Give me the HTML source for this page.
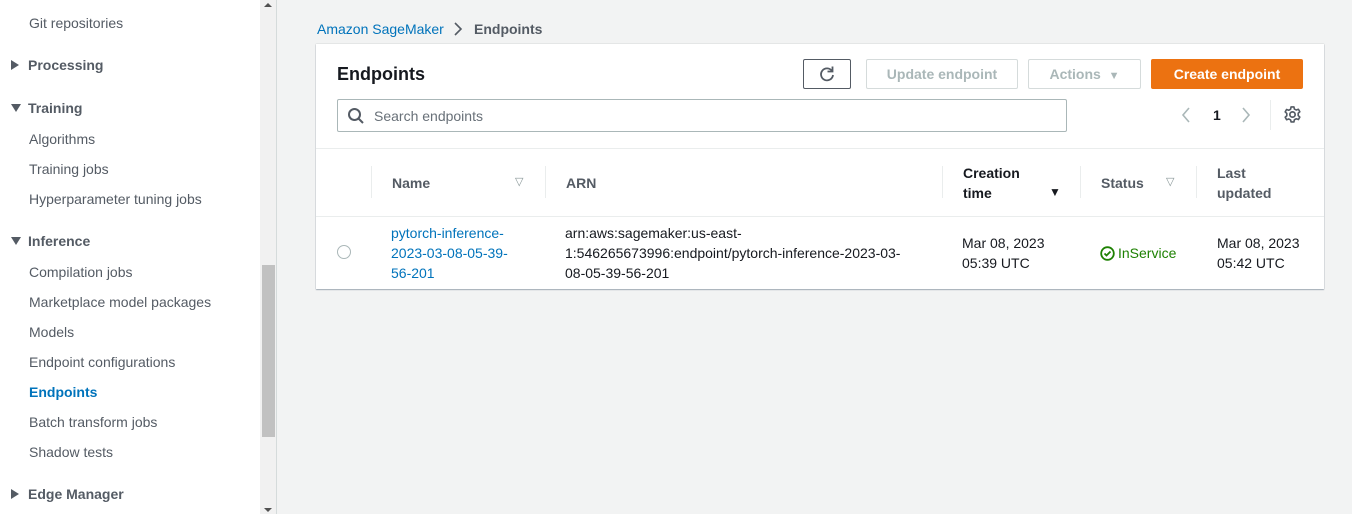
<!DOCTYPE html>
<html><head><style>
*{margin:0;padding:0;box-sizing:border-box}
body{width:1352px;height:514px;overflow:hidden;background:#f2f3f3;font-family:"Liberation Sans",Arial,sans-serif;font-size:14px;color:#16191f;position:relative}
.a{position:absolute;white-space:nowrap}
.sb{position:absolute;left:0;top:0;width:260px;height:514px;background:#fff}
.trk{position:absolute;left:260px;top:0;width:17px;height:514px;background:#f1f1f1;border-right:1px solid #d5dbdb}
.th{position:absolute;left:262px;top:265px;width:13px;height:172px;background:#c1c1c1}
.it{color:#545b64;left:29px}
.hd{font-weight:bold;color:#545b64;left:28px}
.tri{position:absolute;left:11px;width:0;height:0}
.r{border-top:5px solid transparent;border-bottom:5px solid transparent;border-left:8px solid #545b64}
.d{border-left:5px solid transparent;border-right:5px solid transparent;border-top:8px solid #545b64}
.card{position:absolute;left:316px;top:44px;width:1008px;height:245px;background:#fff;box-shadow:0 1px 1px rgba(0,31,63,.3),0 0 1px rgba(0,28,36,.3)}
.btn{position:absolute;height:30px;border:1px solid #d5dbdb;background:#fff;color:#aab7b8;font-weight:bold;text-align:center;line-height:28px;border-radius:2px}
.sep{position:absolute;width:1px;background:#eaeded}
.col{font-weight:bold;color:#545b64}
</style></head><body>
<div class="sb"></div>
<div class="trk"></div><div class="th"></div>
<div class="a" style="left:264px;top:3px;border-left:4px solid transparent;border-right:4px solid transparent;border-bottom:4px solid #505050;width:0"></div>
<div class="a" style="left:264px;top:508px;border-left:4px solid transparent;border-right:4px solid transparent;border-top:4px solid #505050;width:0"></div>

<div class="a it" style="top:15px">Git repositories</div>
<div class="tri r" style="top:60px"></div><div class="a hd" style="top:57px">Processing</div>
<div class="tri d" style="top:104px"></div><div class="a hd" style="top:100px">Training</div>
<div class="a it" style="top:131px">Algorithms</div>
<div class="a it" style="top:161px">Training jobs</div>
<div class="a it" style="top:191px">Hyperparameter tuning jobs</div>
<div class="tri d" style="top:237px"></div><div class="a hd" style="top:233px">Inference</div>
<div class="a it" style="top:264px">Compilation jobs</div>
<div class="a it" style="top:294px">Marketplace model packages</div>
<div class="a it" style="top:324px">Models</div>
<div class="a it" style="top:354px">Endpoint configurations</div>
<div class="a it" style="top:384px;color:#0073bb;font-weight:bold">Endpoints</div>
<div class="a it" style="top:414px">Batch transform jobs</div>
<div class="a it" style="top:444px">Shadow tests</div>
<div class="tri r" style="top:489px"></div><div class="a hd" style="top:486px">Edge Manager</div>

<div class="a" style="left:317px;top:21px;color:#0073bb">Amazon SageMaker</div>
<svg class="a" style="left:452px;top:22px" width="12" height="14"><path d="M3 1l6 6-6 6" fill="none" stroke="#545b64" stroke-width="1.6"/></svg>
<div class="a" style="left:474px;top:21px;font-weight:bold;color:#545b64">Endpoints</div>

<div class="card">
 <div class="a" style="left:21px;top:20px;font-size:18px;font-weight:bold">Endpoints</div>
 <div class="btn" style="left:487px;top:15px;width:48px;border-color:#545b64;color:#545b64"><svg width="18" height="18" style="margin-top:5px"><path d="M14 6A6 6 0 1 0 15 10" fill="none" stroke="#545b64" stroke-width="1.8"/><path d="M14.5 1.5v5h-5" fill="none" stroke="#545b64" stroke-width="1.8"/></svg></div>
 <div class="btn" style="left:550px;top:15px;width:152px">Update endpoint</div>
 <div class="btn" style="left:712px;top:15px;width:113px">Actions&nbsp;&nbsp;<span style="font-size:11px">▼</span></div>
 <div class="btn" style="left:835px;top:15px;width:152px;background:#ec7211;border-color:#ec7211;color:#fff">Create endpoint</div>
 <div class="a" style="left:21px;top:55px;width:730px;height:33px;border:1px solid #aab7b8;border-radius:2px;background:#fff"></div>
 <svg class="a" style="left:31px;top:63px" width="18" height="18"><circle cx="7.5" cy="7.5" r="5.5" fill="none" stroke="#545b64" stroke-width="2"/><path d="M11.5 11.5l4.5 4.5" stroke="#545b64" stroke-width="2"/></svg>
 <div class="a" style="left:58px;top:64px;color:#687078">Search endpoints</div>
 <svg class="a" style="left:864px;top:62px" width="12" height="18"><path d="M9 2L3 9l6 7" fill="none" stroke="#aab7b8" stroke-width="1.6"/></svg>
 <div class="a" style="left:897px;top:63px;font-weight:bold">1</div>
 <svg class="a" style="left:924px;top:62px" width="12" height="18"><path d="M3 2l6 7-6 7" fill="none" stroke="#aab7b8" stroke-width="1.6"/></svg>
 <div class="sep" style="left:954px;top:56px;height:30px"></div>
 <svg class="a" style="left:967px;top:61px" width="19" height="19" viewBox="0 0 20 20"><circle cx="10" cy="10" r="2.8" fill="none" stroke="#545b64" stroke-width="1.8"/><path d="M8.5 2h3l.5 2.3 2 1 2.2-.8 1.5 2.6-1.7 1.6v2.4l1.7 1.6-1.5 2.6-2.2-.8-2 1-.5 2.3h-3L8 15.7l-2-1-2.2.8-1.5-2.6 1.7-1.6V8.9L2.3 7.3l1.5-2.6 2.2.8 2-1z" fill="none" stroke="#545b64" stroke-width="1.7" stroke-linejoin="round"/></svg>
 <div class="a" style="left:0;top:104px;width:1008px;height:1px;background:#eaeded"></div>
 <div class="a" style="left:0;top:172px;width:1008px;height:1px;background:#eaeded"></div>
 <div class="sep" style="left:55px;top:122px;height:32px"></div>
 <div class="sep" style="left:229px;top:122px;height:32px"></div>
 <div class="sep" style="left:626px;top:122px;height:32px"></div>
 <div class="sep" style="left:764px;top:122px;height:32px"></div>
 <div class="sep" style="left:880px;top:122px;height:32px"></div>
 <div class="a col" style="left:76px;top:131px">Name</div>
 <div class="a" style="left:199px;top:131px;color:#879596;font-size:11px">▽</div>
 <div class="a col" style="left:250px;top:131px">ARN</div>
 <div class="a col" style="left:647px;top:119px;line-height:20px;color:#16191f">Creation<br>time</div>
 <div class="a" style="left:733px;top:141px;font-size:12px">▼</div>
 <div class="a col" style="left:785px;top:131px">Status</div>
 <div class="a" style="left:850px;top:131px;color:#879596;font-size:11px">▽</div>
 <div class="a col" style="left:901px;top:119px;line-height:20px">Last<br>updated</div>
 <div class="a" style="left:21px;top:201px;width:14px;height:14px;border:1px solid #aab7b8;border-radius:50%"></div>
 <div class="a" style="left:75px;top:179px;line-height:20px;color:#0073bb">pytorch-inference-<br>2023-03-08-05-39-<br>56-201</div>
 <div class="a" style="left:249px;top:179px;line-height:20px">arn:aws:sagemaker:us-east-<br>1:546265673996:endpoint/pytorch-inference-2023-03-<br>08-05-39-56-201</div>
 <div class="a" style="left:646px;top:189px;line-height:20px">Mar 08, 2023<br>05:39 UTC</div>
 <svg class="a" style="left:784px;top:202px" width="15" height="15"><circle cx="7.5" cy="7.5" r="6.3" fill="none" stroke="#1d8102" stroke-width="1.8"/><path d="M4.5 7.5l2 2 4-4" fill="none" stroke="#1d8102" stroke-width="1.8"/></svg>
 <div class="a" style="left:802px;top:201px;color:#1d8102">InService</div>
 <div class="a" style="left:901px;top:189px;line-height:20px">Mar 08, 2023<br>05:42 UTC</div>
</div>
</body></html>
